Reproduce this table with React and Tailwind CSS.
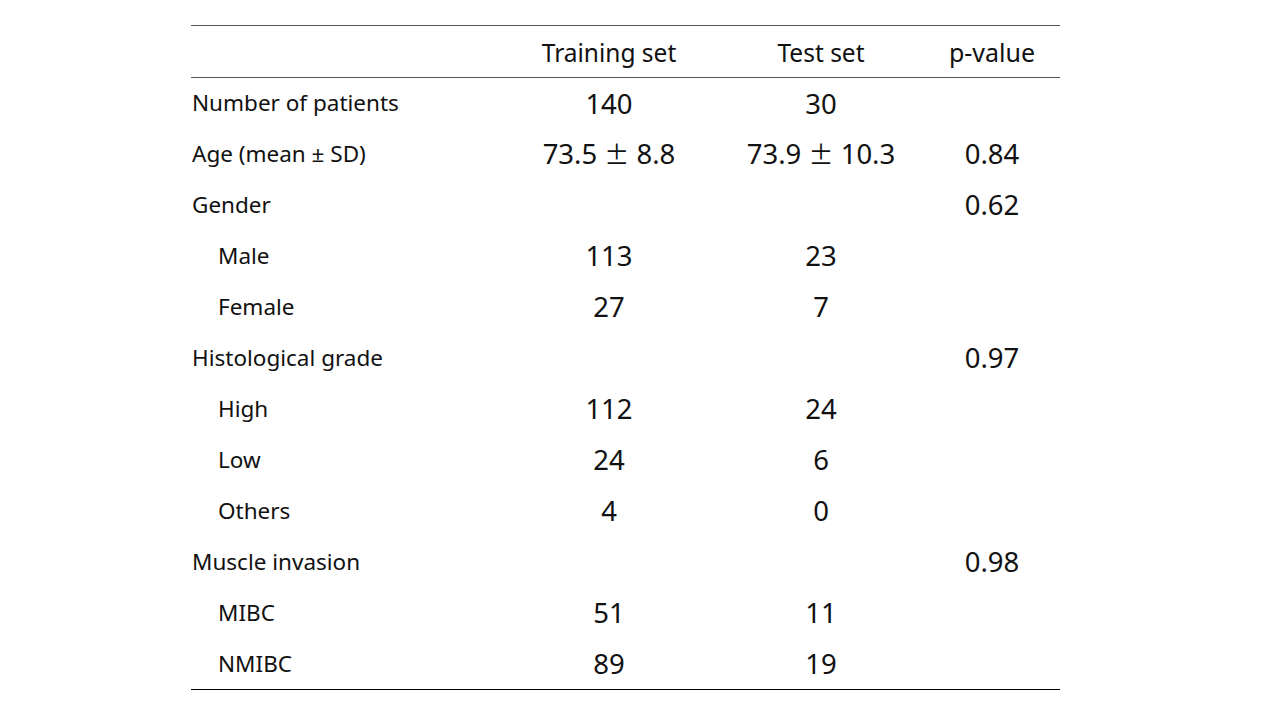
import React from 'react';

const rows = [
  { label: 'Number of patients', train: '140', test: '30', p: '' },
  { label: 'Age (mean ± SD)', train: '73.5 ± 8.8', test: '73.9 ± 10.3', p: '0.84', pm: true },
  { label: 'Gender', train: '', test: '', p: '0.62' },
  { label: 'Male', train: '113', test: '23', p: '', sub: true },
  { label: 'Female', train: '27', test: '7', p: '', sub: true },
  { label: 'Histological grade', train: '', test: '', p: '0.97' },
  { label: 'High', train: '112', test: '24', p: '', sub: true },
  { label: 'Low', train: '24', test: '6', p: '', sub: true },
  { label: 'Others', train: '4', test: '0', p: '', sub: true },
  { label: 'Muscle invasion', train: '', test: '', p: '0.98' },
  { label: 'MIBC', train: '51', test: '11', p: '', sub: true },
  { label: 'NMIBC', train: '89', test: '19', p: '', sub: true },
];

const Value = ({ text, pm }) => {
  if (!pm) return text;
  const [a, b] = text.split(' ± ');
  return (
    <>
      {a} <span className="font-['Noto_Sans_CJK_JP',sans-serif] text-[25px]">±</span> {b}
    </>
  );
};

export default function App() {
  return (
    <div className="w-[1280px] h-[720px] bg-white font-['Noto_Sans','Noto_Sans_CJK_JP',sans-serif] text-[#111]">
      <div className="pt-[25px] pl-[191px]">
        <table className="w-[869px] border-collapse">
          <thead>
            <tr className="h-[52px] border-t-[1.5px] border-b-[1.5px] border-[#555]">
              <th className="w-[309px]" />
              <th className="w-[218px] pt-[3px] text-[24.5px] font-normal text-center">Training set</th>
              <th className="w-[206px] pt-[3px] text-[24.5px] font-normal text-center">Test set</th>
              <th className="w-[136px] pt-[3px] text-[25px] font-normal text-center">p-value</th>
            </tr>
          </thead>
          <tbody className="border-b border-black">
            {rows.map((r) => (
              <tr key={r.label} className="h-[51px]">
                <td className={`text-[22.5px] ${r.sub ? 'pl-[27px]' : 'pl-px'}`}>{r.label}</td>
                <td className="text-[27.5px] text-center">
                  <Value text={r.train} pm={r.pm} />
                </td>
                <td className="text-[27.5px] text-center">
                  <Value text={r.test} pm={r.pm} />
                </td>
                <td className="text-[27.5px] text-center">{r.p}</td>
              </tr>
            ))}
          </tbody>
        </table>
      </div>
    </div>
  );
}
